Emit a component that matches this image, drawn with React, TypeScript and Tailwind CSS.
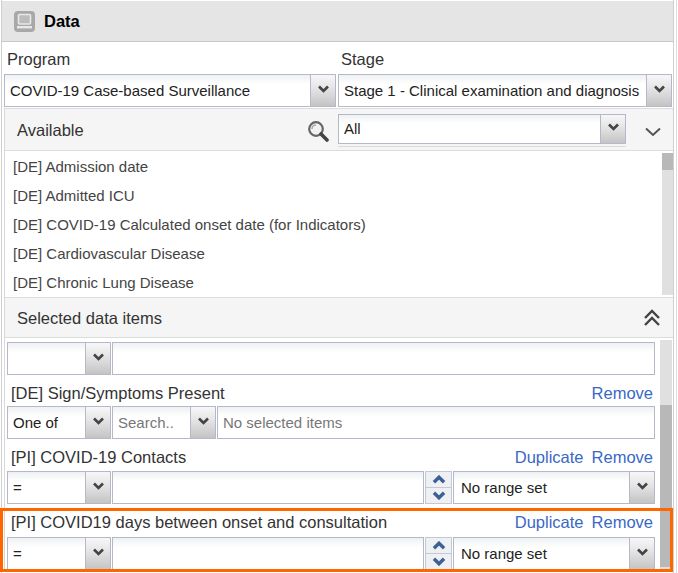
import React from "react";

const Chevron = ({ up = false, color = "#444", w = 13, h = 8, sw = 2.6 }: { up?: boolean; color?: string; w?: number; h?: number; sw?: number }) => (
  <svg width={w} height={h} viewBox="0 0 12 8" className="block">
    <polyline
      points={up ? "1.5,6.5 6,2 10.5,6.5" : "1.5,1.5 6,6 10.5,1.5"}
      fill="none"
      stroke={color}
      strokeWidth={sw}
    />
  </svg>
);

const Trigger = () => (
  <div className="w-[25px] shrink-0 h-full flex items-center justify-center rounded-tr-[3px] border-l border-[#b5b8c8] bg-[linear-gradient(#f7f7f7,#e6e6e6_40%,#c4c4c4)] pb-[4px]">
    <Chevron />
  </div>
);

const Field = ({ className = "", children }: { className?: string; children?: React.ReactNode }) => (
  <div
    className={`flex items-center min-w-0 h-full border border-[#b5b8c8] bg-[linear-gradient(#eef0f2,#ffffff_30%)] overflow-hidden ${className}`}
  >
    {children}
  </div>
);

const Select = ({ className = "", text, muted = false, pad = "pl-[5px]" }: { className?: string; text?: string; muted?: boolean; pad?: string }) => (
  <Field className={className}>
    <div className={`flex-1 min-w-0 whitespace-nowrap overflow-hidden pt-[1px] text-[15px] ${pad} ${muted ? "text-[#777]" : "text-[#222]"}`}>
      {text}
    </div>
    <Trigger />
  </Field>
);

const Input = ({ className = "", text }: { className?: string; text?: string }) => (
  <Field className={className}>
    <div className="pl-[5px] pt-[1px] text-[15px] text-[#777] whitespace-nowrap">{text}</div>
  </Field>
);

const Spinner = () => (
  <div className="w-[27px] shrink-0 h-full flex flex-col border border-[#c4c8d4] bg-[#eff0f3]">
    <div className="flex-1 flex items-center justify-center border-b border-[#c4c8d4]">
      <Chevron up color="#3c5f94" w={14} h={9} sw={3} />
    </div>
    <div className="flex-1 flex items-center justify-center">
      <Chevron color="#3c5f94" w={14} h={9} sw={3} />
    </div>
  </div>
);

const Label = ({ text, duplicate = false, h = "h-[32px] pb-[4px]" }: { text: string; duplicate?: boolean; h?: string }) => (
  <div className={`${h} flex items-end justify-between pl-[4px] pr-[2px] text-[16.5px] leading-[20px]`}>
    <span className="text-[#333]">{text}</span>
    <span className="flex gap-[8px] text-[#3a68c6]">
      {duplicate && <span>Duplicate</span>}
      <span>Remove</span>
    </span>
  </div>
);

const NumericRow = () => (
  <div className="flex h-[33px] gap-[1px]">
    <Select className="w-[104px] shrink-0" text="=" />
    <Input className="flex-1" />
    <Spinner />
    <Select className="w-[202px] shrink-0" text="No range set" pad="pl-[7px]" />
  </div>
);

const Scrollbar = ({ className = "", children }: { className?: string; children?: React.ReactNode }) => (
  <div className={`flex flex-col bg-[#e0e0e0] ${className}`}>{children}</div>
);

const listItems = [
  "[DE] Admission date",
  "[DE] Admitted ICU",
  "[DE] COVID-19 Calculated onset date (for Indicators)",
  "[DE] Cardiovascular Disease",
  "[DE] Chronic Lung Disease",
];

export default function App() {
  return (
    <div className="relative w-[678px] h-[573px] overflow-hidden bg-white font-['Liberation_Sans',Arial,sans-serif] text-[#222]">
      <div className="w-[677px] h-full border-r border-[#dcdcdc]">
        <div className="w-[673px] h-full ml-[1px] pt-[1px] border-x border-[#cfcfcf]">
          {/* Header */}
          <div className="h-[41px] flex items-center bg-[#e5e5e5] border-b border-[#c8c8c8] pl-[12px] gap-[9px]">
            <svg width="21" height="21" viewBox="0 0 21 21" className="block shrink-0">
              <rect x="0" y="0" width="21" height="21" rx="4" fill="#a8a8a8" />
              <rect x="4.5" y="3.5" width="12" height="9.5" rx="1" fill="#bcbcbc" stroke="#e8e8e8" strokeWidth="1.6" />
              <rect x="3" y="15" width="15" height="2.4" fill="#e8e8e8" />
            </svg>
            <span className="text-[16.5px] font-bold text-black pt-[1px]">Data</span>
          </div>

          {/* Program / Stage */}
          <div className="flex gap-[2px] pl-[2px]">
            <div className="w-[332px]">
              <div className="h-[32px] flex items-center pl-[3px] pt-[3px] text-[16.5px] text-[#333]">Program</div>
              <Select className="!h-[33px]" text="COVID-19 Case-based Surveillance" />
            </div>
            <div className="w-[334px]">
              <div className="h-[32px] flex items-center pl-[3px] pt-[3px] text-[16.5px] text-[#333]">Stage</div>
              <Select className="!h-[33px]" text="Stage 1 - Clinical examination and diagnosis" />
            </div>
          </div>

          {/* Inner panel */}
          <div className="ml-[2px] mt-[1px] border-l border-[#d8d8d8]">
            {/* Available */}
            <div className="h-[43px] flex items-center bg-[#f5f5f5] border-y border-[#dcdcdc] pl-[12px]">
              <span className="text-[16.5px] text-[#333] w-[290px] pt-[2px]">Available</span>
              <svg width="22" height="22" viewBox="0 0 22 22" className="block shrink-0 mt-[2px]">
                <circle cx="9" cy="9" r="6.8" fill="#f2f2f2" stroke="#666" strokeWidth="2.2" />
                <path d="M5 9a4 4 0 0 1 4-4" fill="none" stroke="#aaa" strokeWidth="1.6" />
                <line x1="14" y1="14" x2="20" y2="20" stroke="#444" strokeWidth="3.6" strokeLinecap="round" />
              </svg>
              <div className="ml-[9px] w-[288px] shrink-0 pt-[2px]">
                <div className="h-[30px]">
                  <Select text="All" />
                </div>
                <div className="mt-[2px] h-[1px] bg-[#dcdcdc]" />
              </div>
              <div className="ml-[19px] shrink-0 mt-[4px]">
                <svg width="16" height="10" viewBox="0 0 16 10" className="block">
                  <polyline points="1,1.5 8,8 15,1.5" fill="none" stroke="#555" strokeWidth="2" />
                </svg>
              </div>
            </div>

            {/* List */}
            <div className="h-[146px] flex">
              <div className="flex-1 min-w-0 pl-[8px] overflow-hidden pt-[2px]">
                {listItems.map((t) => (
                  <div key={t} className="h-[29px] flex items-center text-[15px] text-[#444] whitespace-nowrap">
                    {t}
                  </div>
                ))}
              </div>
              <Scrollbar className="w-[11px] shrink-0 my-[2px]">
                <div className="h-[17px] bg-[#b8b8b8]" />
              </Scrollbar>
            </div>

            {/* Selected header */}
            <div className="h-[41px] flex items-center justify-between bg-[#f5f5f5] border-y border-[#dcdcdc] pl-[12px] pr-[13px]">
              <span className="text-[16.5px] text-[#333] pt-[1px]">Selected data items</span>
              <svg width="16" height="18" viewBox="0 0 16 18" className="block">
                <polyline points="1,9 8,2 15,9" fill="none" stroke="#444" strokeWidth="2.4" />
                <polyline points="1,16 8,9 15,16" fill="none" stroke="#444" strokeWidth="2.4" />
              </svg>
            </div>

            {/* Selected rows */}
            <div className="flex">
              <div className="w-[650px] shrink-0 pl-[2px] pt-[4px]">
                <div className="flex h-[33px] gap-[1px]">
                  <Select className="w-[104px] shrink-0" />
                  <Input className="flex-1" />
                </div>
                <Label text="[DE] Sign/Symptoms Present" h="h-[31px] pb-[3px]" />
                <div className="flex h-[33px] gap-[1px]">
                  <Select className="w-[104px] shrink-0" text="One of" />
                  <Select className="w-[104px] shrink-0" text="Search.." muted />
                  <Input className="flex-1" text="No selected items" />
                </div>
                <Label text="[PI] COVID-19 Contacts" duplicate />
                <NumericRow />
                <Label text="[PI] COVID19 days between onset and consultation" duplicate h="h-[33px] pb-[5px]" />
                <NumericRow />
              </div>
              <Scrollbar className="w-[12px] shrink-0 ml-[5px] mt-[2px] h-[230px]">
                <div className="h-[65px]" />
                <div className="h-[162px] bg-[#b8b8b8]" />
              </Scrollbar>
            </div>
          </div>
        </div>
      </div>

      {/* Highlight */}
      <div className="absolute left-0 top-[508px] w-[673px] h-[64px] border-[3px] border-[#ff6600] pointer-events-none" />
    </div>
  );
}
